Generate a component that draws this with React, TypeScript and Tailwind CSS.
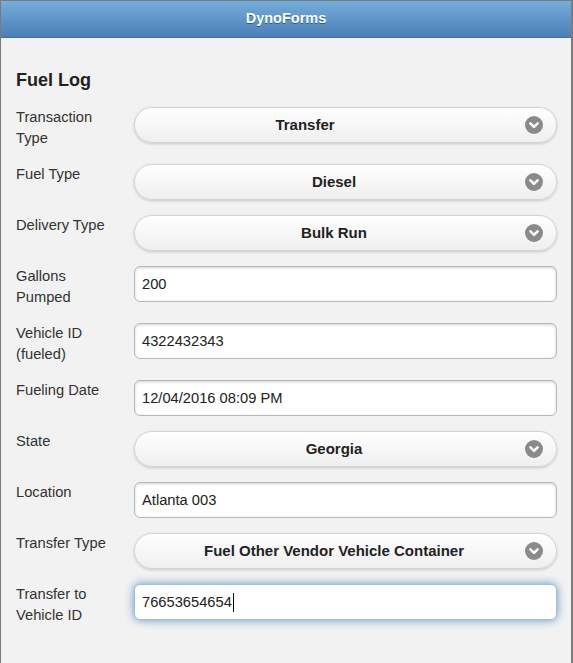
import React from "react";

type Row =
  | { kind: "select"; label: string; value: string; extraPr?: boolean }
  | { kind: "input"; label: string; value: string; focused?: boolean };

const rows: Row[] = [
  { kind: "select", label: "Transaction Type", value: "Transfer", extraPr: true },
  { kind: "select", label: "Fuel Type", value: "Diesel" },
  { kind: "select", label: "Delivery Type", value: "Bulk Run" },
  { kind: "input", label: "Gallons Pumped", value: "200" },
  { kind: "input", label: "Vehicle ID (fueled)", value: "4322432343" },
  { kind: "input", label: "Fueling Date", value: "12/04/2016 08:09 PM" },
  { kind: "select", label: "State", value: "Georgia" },
  { kind: "input", label: "Location", value: "Atlanta 003" },
  { kind: "select", label: "Transfer Type", value: "Fuel Other Vendor Vehicle Container" },
  { kind: "input", label: "Transfer to Vehicle ID", value: "76653654654", focused: true },
];

function ChevronCircle() {
  return (
    <svg width="18" height="18" viewBox="0 0 18 18" className="shrink-0">
      <circle cx="9" cy="9" r="9" fill="#8a8a8a" />
      <path d="M5.4 7.4 L9 10.9 L12.6 7.4" fill="none" stroke="#fff" strokeWidth="2.6" strokeLinecap="round" strokeLinejoin="round" />
    </svg>
  );
}

export default function App() {
  return (
    <div
      className="w-[573px] h-[663px] bg-[#f2f2f2] border-t border-l border-r-2 border-[#7b7b7b] flex flex-col overflow-hidden"
      style={{ fontFamily: '"Liberation Sans", Arial, sans-serif' }}
    >
      <div className="h-[37px] shrink-0 bg-gradient-to-b from-[#74aedb] to-[#4a7fb7] border-b border-[#41709f] flex items-center justify-center">
        <span className="text-white font-bold text-[14.5px] [text-shadow:0_1px_0_#2d5b8a]">DynoForms</span>
      </div>
      <div className="pl-[15px] pr-[14px] pt-[30px]">
        <h1 className="text-[18px] leading-[24px] font-bold text-[#222] mb-[15px]">Fuel Log</h1>
        <div className="flex flex-col gap-[15px]">
          {rows.map((r) => (
            <div key={r.label} className="flex items-start">
              <div className="w-[104px] mr-[14px] text-[14.7px] leading-[21px] text-[#333] shrink-0">{r.label}</div>
              {r.kind === "select" ? (
                <div className="flex-1 h-[36px] rounded-full border border-[#d4d4d4] bg-gradient-to-b from-[#ffffff] to-[#efefef] shadow-[0_1px_3px_rgba(0,0,0,0.18)] flex items-center pl-[15px] pr-[13px]">
                  <div className={"flex-1 text-center font-bold text-[15px] text-[#222] " + (r.extraPr ? "pr-[65px]" : "pr-[7px]")}>
                    {r.value}
                  </div>
                  <ChevronCircle />
                </div>
              ) : (
                <div
                  className={
                    "flex-1 h-[36px] rounded-[6px] border bg-white flex items-center pl-[7px] text-[14.7px] text-[#222] " +
                    (r.focused
                      ? "border-[#9fbfdd] shadow-[0_0_10px_#5f93c7]"
                      : "border-[#b8b8b8] shadow-[inset_0_1px_3px_rgba(0,0,0,0.18)]")
                  }
                >
                  <span>{r.value}</span>
                  {r.focused && <span className="inline-block w-px h-[19px] bg-black ml-px" />}
                </div>
              )}
            </div>
          ))}
        </div>
      </div>
    </div>
  );
}
